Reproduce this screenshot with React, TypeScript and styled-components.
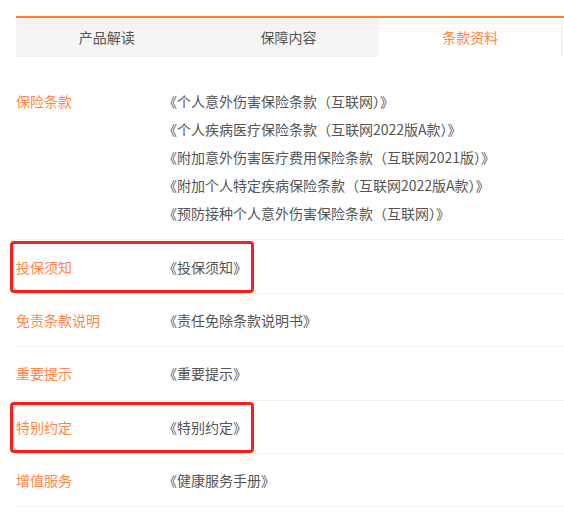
import React, { FC } from "react"
import { styled, createGlobalStyle } from "styled-components"

const GlobalStyle = createGlobalStyle`
  html, body {
    margin: 0;
    padding: 0;
    background: #fff;
    overflow: hidden;
  }
  body {
    font-family: "Noto Sans CJK SC", "Noto Sans", sans-serif;
    font-size: 14px;
  }
`

const TABS = ["产品解读", "保障内容", "条款资料"]

type Row = { label: string; docs: string[]; marked?: boolean }

const ROWS: Row[] = [
  {
    label: "保险条款",
    docs: [
      "《个人意外伤害保险条款（互联网）》",
      "《个人疾病医疗保险条款（互联网2022版A款）》",
      "《附加意外伤害医疗费用保险条款（互联网2021版）》",
      "《附加个人特定疾病保险条款（互联网2022版A款）》",
      "《预防接种个人意外伤害保险条款（互联网）》",
    ],
  },
  { label: "投保须知", docs: ["《投保须知》"], marked: true },
  { label: "免责条款说明", docs: ["《责任免除条款说明书》"] },
  { label: "重要提示", docs: ["《重要提示》"] },
  { label: "特别约定", docs: ["《特别约定》"], marked: true },
  { label: "增值服务", docs: ["《健康服务手册》"] },
]

const App: FC = (): JSX.Element => {
  return (
    <>
      <GlobalStyle />
      <PageStyled>
        <TabBar>
          <div className="tabs">
            {TABS.map((t, i) => (
              <Tab key={t} $active={i === 2}>
                {t}
              </Tab>
            ))}
          </div>
        </TabBar>

        <ClauseList>
          {ROWS.map((row) => (
            <ClauseRow key={row.label} $marked={row.marked}>
              <p className="label">{row.label}</p>
              <ul>
                {row.docs.map((d) => (
                  <li key={d}>{d}</li>
                ))}
              </ul>
            </ClauseRow>
          ))}
        </ClauseList>
      </PageStyled>
    </>
  )
}

const PageStyled = styled.div`
  margin: 16px 0 0 16px;
  width: 560px;
`

const TabBar = styled.div`
  border-top: 2px solid #ff7d33;

  > .tabs {
    display: flex;
    width: 546px;
  }
`

const Tab = styled.div<{ $active?: boolean }>`
  flex: 1;
  height: 39px;
  line-height: 39px;
  text-align: center;
  color: ${(p) => (p.$active ? "#ff8542" : "#555")};
  background-color: ${(p) => (p.$active ? "#fff" : "#f5f5f5")};
  border-right: ${(p) => (p.$active ? "1px solid #eee" : "none")};
`

const ClauseList = styled.div`
  margin-top: 18px;
`

const ClauseRow = styled.div<{ $marked?: boolean }>`
  position: relative;
  display: flex;
  padding: 12.2px 0;
  border-bottom: 1px solid #f2f2f2;
  line-height: 28px;

  > p.label {
    margin: 0;
    width: 147px;
    flex-shrink: 0;
    color: #ff8748;
  }

  ul {
    margin: 0;
    padding: 0;
    list-style: none;
    color: #555;
  }

  ${(p) =>
    p.$marked &&
    `
    &::after {
      content: "";
      position: absolute;
      left: -6px;
      top: 1px;
      bottom: 0;
      width: 244px;
      box-sizing: border-box;
      border: 3px solid #ff1c1c;
      border-radius: 4px;
    }
  `}
`

export default App
